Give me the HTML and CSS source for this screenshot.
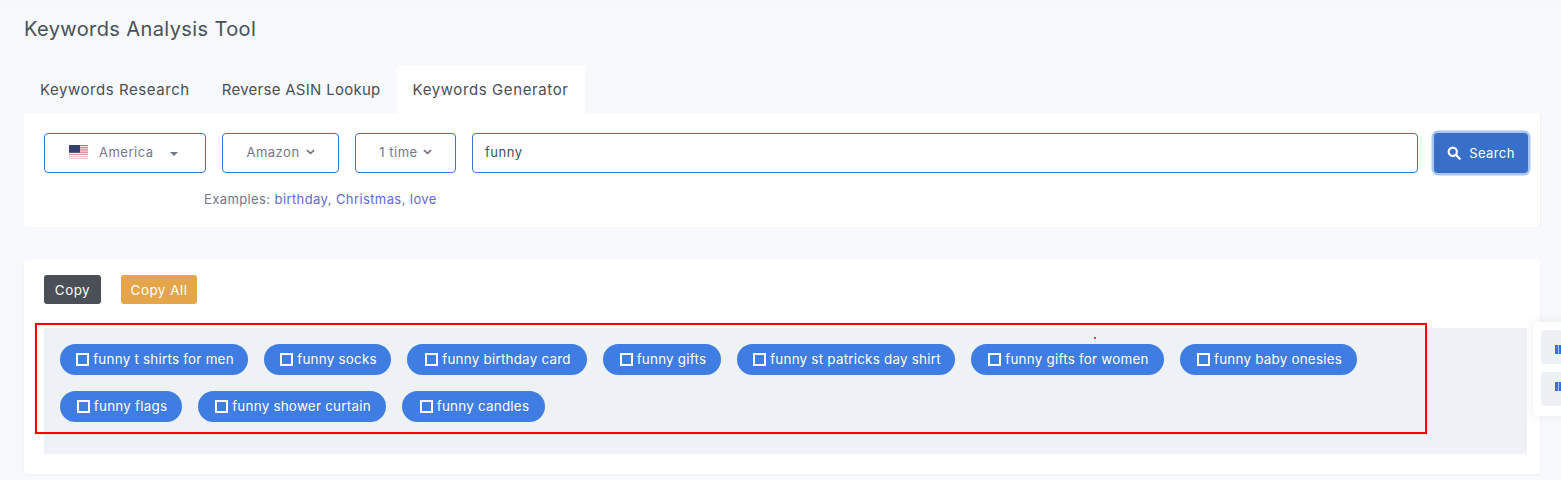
FILE: index.html
```html
<!DOCTYPE html>
<html lang="en">
<head>
<meta charset="utf-8">
<title>Keywords Analysis Tool</title>
<link rel="stylesheet" href="styles.css">
</head>
<body>
<header class="topbar"></header>
<main class="page">
  <h1 class="title">Keywords Analysis Tool</h1>
  <nav class="tabs">
    <a class="tab">Keywords Research</a>
    <a class="tab tab-reverse">Reverse ASIN Lookup</a>
    <a class="tab active">Keywords Generator</a>
  </nav>
  <section class="card search-card">
    <div class="search-row">
      <div class="select select-country">
        <svg class="flag" viewBox="0 0 19 14" width="16" height="14" preserveAspectRatio="none">
          <rect width="19" height="14" fill="#fff"/>
          <rect y="0" width="19" height="1.1" fill="#c9636f"/>
          <rect y="2.2" width="19" height="1.1" fill="#c9636f"/>
          <rect y="4.4" width="19" height="1.1" fill="#c9636f"/>
          <rect y="6.6" width="19" height="1.1" fill="#c9636f"/>
          <rect y="8.8" width="19" height="1.1" fill="#d98d96"/>
          <rect y="11" width="19" height="1.1" fill="#ecc3c7"/>
          <rect y="13" width="19" height="1" fill="#ecc3c7"/>
          <rect width="11" height="7.7" fill="#34406f"/>
        </svg>
        <span class="select-label">America</span>
        <span class="caret"></span>
      </div>
      <div class="select select-market">
        <span>Amazon</span>
        <svg class="chev" viewBox="0 0 10 6" width="9" height="6"><path d="M1 1l4 3.6L9 1" fill="none" stroke="#6f7580" stroke-width="1.8"/></svg>
      </div>
      <div class="select select-time">
        <span>1 time</span>
        <svg class="chev" viewBox="0 0 10 6" width="9" height="6"><path d="M1 1l4 3.6L9 1" fill="none" stroke="#6f7580" stroke-width="1.8"/></svg>
      </div>
      <div class="input">funny</div>
      <button class="search-btn">
        <svg viewBox="0 0 16 16" width="14" height="14"><circle cx="6.6" cy="6.6" r="4.7" fill="none" stroke="#fff" stroke-width="2.4"/><path d="M10.2 10.2l4.3 4.3" stroke="#fff" stroke-width="2.6" stroke-linecap="round"/></svg>
        <span>Search</span>
      </button>
    </div>
    <p class="examples">Examples: <a>birthday</a>, <a>Christmas</a>, <a>love</a></p>
  </section>
  <section class="card result-card">
    <div class="actions">
      <button class="btn btn-dark">Copy</button>
      <button class="btn btn-amber">Copy All</button>
    </div>
    <div class="panel">
      <div class="pills">
        <span class="pill w1"><i class="box"></i>funny t shirts for men</span>
        <span class="pill w2"><i class="box"></i>funny socks</span>
        <span class="pill w3"><i class="box"></i>funny birthday card</span>
        <span class="pill w4"><i class="box"></i>funny gifts</span>
        <span class="pill w5"><i class="box"></i>funny st patricks day shirt</span>
        <span class="pill w6"><i class="box"></i>funny gifts for women</span>
        <span class="pill w7"><i class="box"></i>funny baby onesies</span>
        <span class="pill w8"><i class="box"></i>funny flags</span>
        <span class="pill w9"><i class="box"></i>funny shower curtain</span>
        <span class="pill w10"><i class="box"></i>funny candles</span>
      </div>
    </div>
  </section>
</main>
<div class="highlight"></div>
<div class="dot"></div>
<aside class="float">
  <div class="float-item"><span class="mark"></span></div>
  <div class="float-item float-item-low"><span class="mark"></span></div>
</aside>
</body>
</html>
```
FILE: styles.css
```css
* { box-sizing: border-box; }
html, body { margin: 0; height: 480px; overflow: hidden; }
body {
  background: #f8f9fc;
  font-family: "Inter", "Lato", sans-serif;
  color: #495057;
  position: relative;
}
.topbar {
  height: 1px;
  box-shadow: 0 0 14px rgba(100, 110, 130, .22);
}
.page { padding: 0 21px 0 24px; }
.title {
  margin: 15px 0 0;
  height: 50px;
  font-size: 20px;
  line-height: 27px;
  letter-spacing: .39px;
  font-weight: 400;
  color: #495057;
}
.tabs { display: flex; height: 47px; }
.tab {
  display: flex;
  align-items: center;
  padding: 0 16px;
  font-size: 15px;
  letter-spacing: .55px;
  color: #495057;
  white-space: nowrap;
}
.tab-reverse { letter-spacing: .28px; }
.tab.active { background: #fff; border-radius: 3px 3px 0 0; letter-spacing: .6px; }
.card {
  background: #fff;
  border-radius: 0 0 4px 4px;
}
.search-card {
  height: 114px;
  padding: 20px 12px 0 20px;
  box-shadow: 1px 0 1px rgba(120, 130, 150, .08);
}
.search-row { display: flex; align-items: center; height: 40px; gap: 16px; }
.select, .input {
  height: 40px;
  padding-bottom: 2px;
  background: #fff;
  border: 1px solid #3a74cf;
  border-radius: 4px;
  font-size: 13px;
  letter-spacing: .5px;
  color: #74788d;
  display: flex;
  align-items: center;
}
.select-country { width: 162px; padding-left: 24px; }
.flag { width: 19px; height: 14px; }
.select-label { margin-left: 11px; }
.caret {
  margin-left: 16px;
  margin-top: 4px;
  border-top: 4px solid #74788d;
  border-left: 4px solid transparent;
  border-right: 4px solid transparent;
}
.select-market { width: 117px; justify-content: center; gap: 6px; }
.select-time { width: 101px; justify-content: center; gap: 5px; }
.input {
  flex: 1;
  padding-left: 12px;
  color: #495057;
}
.search-btn {
  width: 94px;
  height: 40px;
  display: flex;
  align-items: center;
  justify-content: center;
  gap: 8px;
  background: #386fc9;
  color: #fff;
  border: 0;
  border-radius: 4px;
  box-shadow: 0 0 0 2.5px #a9c6f3;
  font: 400 13px "Inter", sans-serif;
  letter-spacing: .4px;
}
.examples {
  margin: 18px 0 0 160px;
  font-size: 13px;
  line-height: 17px;
  letter-spacing: .4px;
  color: #74788d;
}
.examples a { color: #6268dd; }
.result-card {
  margin-top: 32px;
  height: 215px;
  border-radius: 4px;
  padding: 16px 13px 0 20px;
  box-shadow: 0 1px 3px rgba(120, 130, 150, .08);
}
.actions { display: flex; gap: 20px; height: 53px; }
.btn {
  height: 29px;
  border: 0;
  border-radius: 3px;
  color: #fff;
  font: 400 13.4px "Inter", sans-serif;
  letter-spacing: .5px;
  padding: 0;
}
.btn-dark { width: 57px; background: #4a4f58; }
.btn-amber { width: 76px; background: #e5a54b; }
.panel {
  height: 126px;
  background: #eef1f6;
  padding: 16px 60px 16px 16px;
}
.pills { display: flex; flex-wrap: wrap; gap: 16px; }
.pill {
  height: 31px;
  padding: 0 0 1px 2px;
  display: flex;
  align-items: center;
  justify-content: center;
  gap: 4px;
  background: #3f7de2;
  color: #fff;
  border-radius: 16px;
  font-size: 13.4px;
  letter-spacing: .24px;
  white-space: nowrap;
}
.box {
  width: 13px;
  height: 13px;
  border: 2px solid #fff;
  flex: none;
}
.w1 { width: 188px; }
.w2 { width: 127px; }
.w3 { width: 180px; }
.w4 { width: 118px; }
.w5 { width: 218px; }
.w6 { width: 193px; }
.w7 { width: 177px; }
.w8 { width: 122px; }
.w9 { width: 188px; }
.w10 { width: 143px; }
.highlight {
  position: absolute;
  left: 35px;
  top: 323px;
  width: 1392px;
  height: 111px;
  border: 2px solid #ff0000;
  box-shadow: 0 0 1px rgba(255, 80, 80, .6);
}
.dot {
  position: absolute;
  left: 1094px;
  top: 337px;
  width: 2px;
  height: 2px;
  background: #e8434a;
}
.float {
  position: absolute;
  left: 1533px;
  top: 322px;
  width: 40px;
  height: 94px;
  padding: 8px;
  background: #fff;
  border-radius: 4px;
  box-shadow: 0 0 8px rgba(120, 130, 150, .14);
  display: flex;
  flex-direction: column;
  gap: 8px;
}
.float-item {
  height: 34px;
  width: 40px;
  background: #eef1f4;
  border-radius: 3px;
  flex: none;
  padding: 15px 0 0 14px;
}
.float-item-low { padding-top: 10px; }
.mark {
  display: block;
  width: 6px;
  height: 9px;
  background: linear-gradient(90deg, #2f74e0 0 50%, #a8c6f2 50% 60%, #2f74e0 60%);
}
```
